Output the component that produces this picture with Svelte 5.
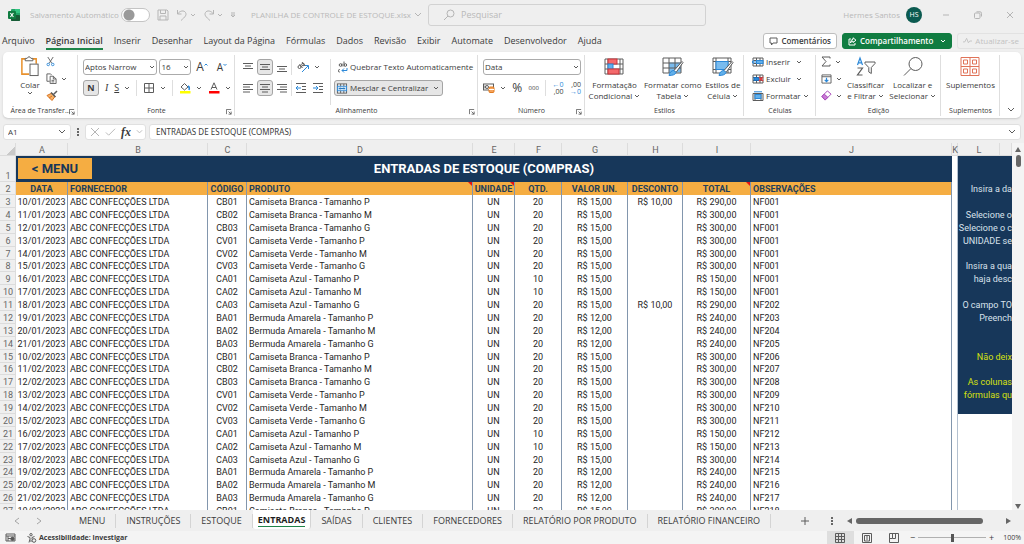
<script>
  const menuTabs = ['Arquivo', 'Página Inicial', 'Inserir', 'Desenhar', 'Layout da Página', 'Fórmulas', 'Dados', 'Revisão', 'Exibir', 'Automate', 'Desenvolvedor', 'Ajuda'];
  const sheets = ['MENU', 'INSTRUÇÕES', 'ESTOQUE', 'ENTRADAS', 'SAÍDAS', 'CLIENTES', 'FORNECEDORES', 'RELATÓRIO POR PRODUTO', 'RELATÓRIO FINANCEIRO'];
  const letters = ['A', 'B', 'C', 'D', 'E', 'F', 'G', 'H', 'I', 'J', 'K', 'L', ''];

  const headers = [
    { text: 'DATA' },
    { text: 'FORNECEDOR', left: true },
    { text: 'CÓDIGO' },
    { text: 'PRODUTO', left: true, note: true },
    { text: 'UNIDADE', note: true },
    { text: 'QTD.' },
    { text: 'VALOR UN.' },
    { text: 'DESCONTO' },
    { text: 'TOTAL', note: true },
    { text: 'OBSERVAÇÕES', left: true }
  ];

  // data, código, qtd, desconto, total, observação
  const entries = [
    ['10/01/2023', 'CB01', 20, 'R$ 10,00', '290,00', 'NF001'],
    ['11/01/2023', 'CB02', 20, '', '300,00', 'NF001'],
    ['12/01/2023', 'CB03', 20, '', '300,00', 'NF001'],
    ['13/01/2023', 'CV01', 20, '', '300,00', 'NF001'],
    ['14/01/2023', 'CV02', 20, '', '300,00', 'NF001'],
    ['15/01/2023', 'CV03', 20, '', '300,00', 'NF001'],
    ['16/01/2023', 'CA01', 10, '', '150,00', 'NF001'],
    ['17/01/2023', 'CA02', 10, '', '150,00', 'NF001'],
    ['18/01/2023', 'CA03', 20, 'R$ 10,00', '290,00', 'NF202'],
    ['19/01/2023', 'BA01', 20, '', '240,00', 'NF203'],
    ['20/01/2023', 'BA02', 20, '', '240,00', 'NF204'],
    ['21/01/2023', 'BA03', 20, '', '240,00', 'NF205'],
    ['10/02/2023', 'CB01', 20, '', '300,00', 'NF206'],
    ['11/02/2023', 'CB02', 20, '', '300,00', 'NF207'],
    ['12/02/2023', 'CB03', 20, '', '300,00', 'NF208'],
    ['13/02/2023', 'CV01', 20, '', '300,00', 'NF209'],
    ['14/02/2023', 'CV02', 20, '', '300,00', 'NF210'],
    ['15/02/2023', 'CV03', 20, '', '300,00', 'NF211'],
    ['16/02/2023', 'CA01', 10, '', '150,00', 'NF212'],
    ['17/02/2023', 'CA02', 10, '', '150,00', 'NF213'],
    ['18/02/2023', 'CA03', 20, '', '300,00', 'NF214'],
    ['19/02/2023', 'BA01', 20, '', '240,00', 'NF215'],
    ['20/02/2023', 'BA02', 20, '', '240,00', 'NF216'],
    ['21/02/2023', 'BA03', 20, '', '240,00', 'NF217'],
    ['10/03/2023', 'CB01', 20, '', '300,00', 'NF218']
  ];

  const products = { CB: 'Camiseta Branca', CV: 'Camiseta Verde', CA: 'Camiseta Azul', BA: 'Bermuda Amarela' };
  const sizes = { 1: 'P', 2: 'M', 3: 'G' };

  // help panel lines, by sheet row
  const help = {
    2: 'Insira a da',
    4: 'Selecione o',
    5: 'Selecione o c',
    6: 'UNIDADE se',
    8: 'Insira a qua',
    9: 'haja desc',
    11: 'O campo TO',
    12: 'Preench',
    15: 'Não deix',
    17: 'As colunas',
    18: 'fórmulas qu'
  };
  const helpEnd = 19;

  let activeMenu = $state('Página Inicial');
  let activeSheet = $state('ENTRADAS');
  let zoom = $state(50);

  function productName(code) {
    return `${products[code.slice(0, 2)]} - Tamanho ${sizes[code.slice(3)]}`;
  }
</script>

{#snippet chevron()}
  <svg class="chev" viewBox="0 0 6 6" width="6" height="6"><path d="M1 2l2 2 2-2" /></svg>
{/snippet}

{#snippet launcher()}
  <svg class="launcher" viewBox="0 0 7 7" width="6" height="6"><path d="M.5 6V.5H6M3 3l3 3M6 3v3H3" /></svg>
{/snippet}

{#snippet lines(widths, centered)}
  <svg class="ico" viewBox="0 0 12 12" width="12" height="12">
    {#each widths as w, i}
      <path d={`M${centered ? 6 - w / 2 : 1} ${2.5 + i * 2.5}h${w}`} />
    {/each}
  </svg>
{/snippet}

{#snippet helpCell(row)}
  {#if row <= helpEnd}
    <td class="help" class:warn={row >= 15} colspan="2">{help[row] ?? ''}</td>
  {:else}
    <td colspan="2"></td>
  {/if}
{/snippet}

<div class="excel">
  <header class="titlebar">
    <div class="quick">
      <svg class="logo" viewBox="0 0 12 12" width="12" height="12">
        <rect x="3" y="0" width="9" height="12" rx="1" fill="#21a366" />
        <rect x="7" y="0" width="5" height="4" fill="#33c481" />
        <rect x="3" y="6" width="9" height="6" rx="1" fill="#185c37" />
        <rect x="0" y="2" width="8" height="8" rx="1" fill="#107c41" />
        <path d="M2.4 4l3 4M5.4 4l-3 4" stroke="#fff" stroke-width="1.1" />
      </svg>
      <label class="autosave">
        Salvamento Automático
        <input type="checkbox" />
      </label>
      <button aria-label="Salvar">
        <svg viewBox="0 0 12 12" width="12" height="12"><path d="M1 1h9l1 1v9H1zM3.500 1v3.500h5V1M3 11V7h6v4" /></svg>
      </button>
      <button aria-label="Desfazer">
        <svg viewBox="0 0 12 12" width="12" height="12"><path d="M1.500 1v4h4M1.500 5C4 1.500 8 1 9.500 3.500S9 8 5 11.500" /></svg>{@render chevron()}
      </button>
      <button aria-label="Refazer">
        <svg viewBox="0 0 12 12" width="12" height="12"><path d="M10.500 1v4h-4M10.500 5C8 1.500 4 1 2.500 3.500S3 8 7 11.500" /></svg>{@render chevron()}
      </button>
      <button aria-label="Personalizar">
        <svg viewBox="0 0 6 8" width="6" height="8"><path d="M1 2h4M1 4l2 2 2-2z" /></svg>
      </button>
    </div>
    <button class="filename">PLANILHA DE CONTROLE DE ESTOQUE.xlsx
      <svg viewBox="0 0 8 6" width="8" height="6"><path d="M1 1l3 3 3-3" /></svg>
    </button>
    <label class="search">
      <svg viewBox="0 0 12 12" width="12" height="12"><circle cx="7.500" cy="4.500" r="3.500" /><path d="M5 7L1 11" /></svg>
      <input type="text" placeholder="Pesquisar" aria-label="Pesquisar" />
    </label>
    <div class="account">
      <span>Hermes Santos</span>
      <span class="avatar">HS</span>
      <button aria-label="Minimizar"><svg viewBox="0 0 8 8" width="8" height="8"><path d="M1 4h6" /></svg></button>
      <button aria-label="Restaurar"><svg viewBox="0 0 8 8" width="8" height="8"><rect x=".5" y="2" width="5.500" height="5.500" rx="1" /><path d="M2.500 .8H6q1.500 0 1.500 1.500V5.500" /></svg></button>
      <button aria-label="Fechar"><svg viewBox="0 0 8 8" width="8" height="8"><path d="M1 1l6 6M7 1L1 7" /></svg></button>
    </div>
  </header>

  <nav class="menu">
    {#each menuTabs as tab}
      <button class:active={tab === activeMenu} onclick={() => (activeMenu = tab)}>{tab}</button>
    {/each}
    <div class="actions">
      <button class="comments">
        <svg viewBox="0 0 9 9" width="9" height="9"><path d="M1 1h7v5H4L2.500 8V6H1z" /></svg>Comentários
      </button>
      <button class="share">
        <svg viewBox="0 0 9 9" width="9" height="9"><path d="M3 2H1v6h6V6M5 .8l3 2.400L5 5.500V4Q3 4 2.500 6 2.500 2.500 5 2.300z" /></svg>Compartilhamento
        {@render chevron()}
      </button>
      <button class="update">
        <svg viewBox="0 0 10 8" width="9" height="8"><path d="M0 5h2l2-4 2 5 1.500-2H10" /></svg>Atualizar-se
      </button>
    </div>
  </nav>

  <section class="ribbon">
    <div class="group">
      <div class="body clip">
        <button class="big">
          <svg viewBox="0 0 20 22" width="20" height="22">
            <path d="M5 3H1.500v16H9M13 3h3.500v5" stroke="#e8912d" stroke-width="1.600" />
            <path d="M5 5V2.500h2Q9 -1 11 2.500h2V5z" fill="#fff" />
            <rect x="10" y="8.500" width="8.500" height="12" fill="#fff" />
          </svg>
          Colar
          {@render chevron()}
        </button>
        <div class="stack">
          <button aria-label="Recortar"><svg viewBox="0 0 10 12" width="9" height="11"><path d="M2 1l4.500 7M8 1L3.500 8" /><circle cx="2.500" cy="9.300" r="1.400" stroke="#2b88d8" /><circle cx="7.500" cy="9.300" r="1.400" stroke="#2b88d8" /></svg></button>
          <button aria-label="Copiar"><svg viewBox="0 0 12 12" width="11" height="11"><path d="M4 9H1V1h4l1 1M4.500 3.500H8l3 3V11.500H4.500zM8 3.500v3h3M6 8h3M6 9.700h3" /></svg>{@render chevron()}</button>
          <button aria-label="Pincel"><svg viewBox="0 0 12 11" width="12" height="11"><path d="M1 5.500l5-2.500 3 3.500-3 4z" fill="#f5b26b" stroke="#d9721c" /><path d="M3 8l3-2" stroke="#d9721c" /><path d="M5 2.500l4.500 4.500M7.500 4.500L11 1" stroke-width="1.500" /></svg></button>
        </div>
      </div>
      <div class="caption">Área de Transfer...{@render launcher()}</div>
    </div>

    <div class="group">
      <div class="body rows">
        <div class="row">
          <span class="pick font"><select aria-label="Fonte"><option>Aptos Narrow</option></select>{@render chevron()}</span>
          <span class="pick size"><select aria-label="Tamanho"><option>16</option></select>{@render chevron()}</span>
          <button class="letter" aria-label="Aumentar fonte">A<svg viewBox="0 0 4 8" width="4" height="10"><path d="M.5 2.500L2 1l1.500 1.500" stroke="#2b88d8" /></svg></button>
          <button class="letter small" aria-label="Diminuir fonte">A<svg viewBox="0 0 4 8" width="4" height="10"><path d="M.5 1L2 2.500 3.500 1" stroke="#2b88d8" /></svg></button>
        </div>
        <div class="row spread">
          <button class="on sq"><b>N</b></button>
          <button><i>I</i></button>
          <button><u>S</u>{@render chevron()}</button>
          <span class="bar"></span>
          <button aria-label="Bordas"><svg class="ico" viewBox="0 0 12 12" width="12" height="12"><path d="M1.500 1.500h9v9h-9zM6 1.500v9M1.500 6h9" /></svg>{@render chevron()}</button>
          <span class="bar"></span>
          <button aria-label="Cor de preenchimento"><svg viewBox="0 0 12 12" width="12" height="12"><path d="M2 5l3.500-3.500L9 5 5.500 8z" /><path d="M9 4q2 1 1 4" stroke="#2b88d8" stroke-width="1.500" /><rect x="1" y="9" width="10.500" height="2.500" fill="#ff0" stroke="none" /></svg>{@render chevron()}</button>
          <button aria-label="Cor da fonte"><svg viewBox="0 0 12 12" width="12" height="12"><path d="M3 7.500L6 .8l3 6.700M4 5.500h4" /><rect x="1" y="9" width="10.500" height="2.500" fill="#f00" stroke="none" /></svg>{@render chevron()}</button>
        </div>
      </div>
      <div class="caption">Fonte{@render launcher()}</div>
    </div>

    <div class="group align">
      <div class="body rows">
        <div class="row">
          <button class="sq" aria-label="Topo">{@render lines([10, 6, 10], true)}</button>
          <button class="sq on" aria-label="Meio"><svg class="ico" viewBox="0 0 12 12" width="12" height="12"><path d="M1 3.500h10M3 6h6M1 8.500h10" /></svg></button>
          <button class="sq" aria-label="Base"><svg class="ico" viewBox="0 0 12 12" width="12" height="12"><path d="M1 5.500h10M3 8h6M1 10.500h10" /></svg></button>
          <span class="bar"></span>
          <button class="orient" aria-label="Orientação"><svg viewBox="0 0 12 12" width="12" height="12"><path d="M5 11l6-6M8 4.500h3.500V8" stroke="#2b88d8" /><circle cx="2.500" cy="6" r="1.500" /><path d="M2.500 3l3 4M5 1l3 4" /><circle cx="6" cy="3.500" r="1.300" /></svg>{@render chevron()}</button>
        </div>
        <div class="row">
          <button class="sq" aria-label="Esquerda">{@render lines([10, 7, 10, 7], false)}</button>
          <button class="sq on" aria-label="Centro">{@render lines([10, 6, 10, 6], true)}</button>
          <button class="sq" aria-label="Direita"><svg class="ico" viewBox="0 0 12 12" width="12" height="12"><path d="M1 2.500h10M4 5h7M1 7.500h10M4 10h7" /></svg></button>
          <span class="bar"></span>
          <button class="sq" aria-label="Diminuir recuo"><svg class="ico" viewBox="0 0 12 12" width="12" height="12"><path d="M1 1.500h10M7 4.500h4M7 7.500h4M1 10.500h10" /><path d="M6 6H1M3 4L1 6l2 2" stroke="#2b88d8" /></svg></button>
          <button class="sq" aria-label="Aumentar recuo"><svg class="ico" viewBox="0 0 12 12" width="12" height="12"><path d="M1 1.500h10M7 4.500h4M7 7.500h4M1 10.500h10" /><path d="M1 6h5M4 4l2 2-2 2" stroke="#2b88d8" /></svg></button>
        </div>
      </div>
      <div class="body rows wide">
        <button class="wrap">
          <svg viewBox="0 0 10 12" width="10" height="12"><circle cx="2.500" cy="4" r="1.300" /><path d="M4 2.500v3M6 .5v5M1.800 8.500q-1.500 0-1.500 1.300t1.500 1.300" /><circle cx="7.400" cy="4" r="1.300" /><path d="M9 7v2.500H4M6 7.500l-2 2 2 2" stroke="#2b88d8" /></svg>
          Quebrar Texto Automaticamente
        </button>
        <button class="on merge">
          <svg viewBox="0 0 12 12" width="12" height="11"><rect x="1" y="1" width="10" height="10" fill="#fff" /><rect x="1" y="3.500" width="10" height="5" fill="#cfe6f8" stroke="#2b88d8" /><path d="M4.500 1v2.500M8 1v2.500M4.500 8.500V11M8 8.500V11" /><path d="M3 6h6M4 5L3 6l1 1M8 5l1 1-1 1" stroke="#1b6fb8" /></svg>
          Mesclar e Centralizar
          {@render chevron()}
        </button>
      </div>
      <div class="caption">Alinhamento{@render launcher()}</div>
    </div>

    <div class="group">
      <div class="body rows">
        <div class="row"><span class="pick format"><select aria-label="Formato de número"><option>Data</option></select>{@render chevron()}</span></div>
        <div class="row spread">
          <button aria-label="Moeda"><svg viewBox="0 0 12 10" width="12" height="10"><rect x=".5" y="1" width="10" height="6" /><circle cx="4" cy="4" r="1.500" /><path d="M2 2.500v3" /><rect x="6" y="4" width="5" height="5.500" rx="1" fill="#f5a35c" stroke="#e07a1f" /><path d="M6 6.500h5" stroke="#fff" /></svg>{@render chevron()}</button>
          <button class="pct">%</button>
          <button class="zeros">000</button>
          <span class="bar"></span>
          <button class="dec" aria-label="Aumentar casas"><span>←0</span><span>,00</span></button>
          <button class="dec" aria-label="Diminuir casas"><span>,00</span><span>→0</span></button>
        </div>
      </div>
      <div class="caption">Número{@render launcher()}</div>
    </div>

    <div class="group">
      <div class="body bigs">
        <button class="big">
          <svg viewBox="0 0 20 18" width="20" height="18"><path d="M1 1.500h18v15H1zM1 6.500h18M1 11.500h18M4 1.500v15M16 1.500v15" /><rect x="4" y="1.500" width="9" height="5" fill="#f4696b" stroke="#c9353a" /><rect x="4" y="6.500" width="5" height="5" fill="#62b0ea" stroke="#2b88d8" /><rect x="4" y="11.500" width="11" height="5" fill="#f4696b" stroke="#c9353a" /></svg>
          <span>Formatação</span><span>Condicional {@render chevron()}</span>
        </button>
        <button class="big">
          <svg viewBox="0 0 22 20" width="22" height="20"><rect x="7" y="6" width="12" height="10" fill="#79bbee" stroke="none" /><path d="M1 1.500h18v15H1zM1 6.500h18M1 11.500h18M7 1.500v15M13 1.500v15" /><path d="M20 5l-8 9 2 2 7-10z" fill="#fff" /><path d="M12 14q-4 0-5 5 6 0 7-3z" fill="#62b0ea" stroke="#2b88d8" /></svg>
          <span>Formatar como</span><span>Tabela {@render chevron()}</span>
        </button>
        <button class="big">
          <svg viewBox="0 0 22 20" width="22" height="20"><path d="M1 1.500h18v15H1zM1 5h18M1 13h18M4 1.500v15M16 1.500v15" /><rect x="4" y="5" width="12" height="8" fill="#79bbee" stroke="#2b88d8" /><path d="M20 5l-8 9 2 2 7-10z" fill="#fff" /><path d="M12 14q-4 0-5 5 6 0 7-3z" fill="#62b0ea" stroke="#2b88d8" /></svg>
          <span>Estilos de</span><span>Célula {@render chevron()}</span>
        </button>
      </div>
      <div class="caption">Estilos</div>
    </div>

    <div class="group">
      <div class="body stack cells">
        <button><svg viewBox="0 0 12 10" width="12" height="10"><path d="M1 1h10v8H1zM1 3.500h10M1 6.500h10M4.500 1v8M8 1v8" /><rect x="4.500" y="3.500" width="6.500" height="3" fill="#62b0ea" stroke="#2b88d8" /><path d="M5 5H0M2 3L0 5l2 2" stroke="#2b88d8" /></svg><span>Inserir</span>{@render chevron()}</button>
        <button><svg viewBox="0 0 12 10" width="12" height="10"><path d="M1 1h10v8H1zM1 3.500h10M1 6.500h10M4.500 1v8M8 1v8" /><rect x="2" y="3.500" width="5" height="3" fill="#2b88d8" stroke="#1b6fb8" /><path d="M7 3l4 4M11 3L7 7" stroke="#e0393e" stroke-width="1.300" /></svg><span>Excluir</span>{@render chevron()}</button>
        <button><svg viewBox="0 0 12 10" width="12" height="10"><path d="M1 2.500h10v7H1zM3 2.500v7M9 2.500v7" /><rect x="3" y="3.500" width="6" height="4" fill="#62b0ea" stroke="#2b88d8" /><path d="M2 .8h8" stroke="#2b88d8" /></svg><span>Formatar</span>{@render chevron()}</button>
      </div>
      <div class="caption">Células</div>
    </div>

    <div class="group">
      <div class="body edit">
        <div class="stack">
          <button aria-label="AutoSoma"><svg viewBox="0 0 10 11" width="10" height="11"><path d="M9 2.500V1H1l4 4.500L1 10h8V8.500" /></svg>{@render chevron()}</button>
          <button aria-label="Preencher"><svg viewBox="0 0 12 11" width="11" height="10"><path d="M1 1h10v9H1zM1 3h10" /><path d="M6 4v4.500M4 6.500l2 2 2-2" stroke="#2b88d8" stroke-width="1.300" /></svg>{@render chevron()}</button>
          <button aria-label="Limpar"><svg viewBox="0 0 12 12" width="11" height="11"><path d="M1 7l6-6 4 3.500-6 6H4z" fill="#fff" stroke="#a33fb5" /><path d="M1 7l2.500-2.500 4 3.500L5 10.500H4z" fill="#c97ad6" stroke="#a33fb5" /></svg>{@render chevron()}</button>
        </div>
        <button class="big">
          <svg viewBox="0 0 20 20" width="20" height="20"><path d="M1.500 8.500L4 1.500l2.500 7M2.300 6.300h3.400" stroke="#2b88d8" stroke-width="1.200" /><path d="M1.500 11.500h5l-5 7h5" stroke-width="1.200" /><path d="M9 5.500h10v1.500l-3.700 4v6l-2.500-1.500v-4.500L9 7z" /></svg>
          <span>Classificar</span><span>e Filtrar {@render chevron()}</span>
        </button>
        <button class="big">
          <svg viewBox="0 0 20 20" width="20" height="20"><circle cx="12.500" cy="7.500" r="6.500" /><path d="M8 12l-7 7" /></svg>
          <span>Localizar e</span><span>Selecionar {@render chevron()}</span>
        </button>
      </div>
      <div class="caption">Edição</div>
    </div>

    <div class="group">
      <div class="body bigs">
        <button class="big">
          <svg class="addins" viewBox="0 0 20 20" width="20" height="20"><path d="M1 1h18v18H1zM10 1v18M1 10h18" /><path d="M3.500 3.500h4v4h-4zM12.500 3.500h4v4h-4zM3.500 12.500h4v4h-4zM12.500 12.500h4v4h-4z" /></svg>
          <span>Suplementos</span>
        </button>
      </div>
      <div class="caption">Suplementos</div>
    </div>

    <button class="collapse" aria-label="Recolher"><svg viewBox="0 0 8 6" width="8" height="6"><path d="M1 1l3 3 3-3" /></svg></button>
  </section>

  <div class="formula">
    <div class="namebox">
      <input type="text" value="A1" aria-label="Caixa de nome" />
      <svg viewBox="0 0 8 6" width="8" height="6"><path d="M1 1l3 3 3-3" /></svg>
    </div>
    <span class="dots"></span>
    <div class="fx">
      <svg viewBox="0 0 10 10" width="10" height="10"><path d="M1 1l8 8M9 1L1 9" stroke="#b5b5b5" /></svg>
      <svg viewBox="0 0 12 10" width="11" height="10"><path d="M1 5.500L4 8.500 11 1.500" stroke="#b5b5b5" /></svg>
      <i>fx</i>
      <svg viewBox="0 0 8 6" width="7" height="6"><path d="M1 1l3 3 3-3" stroke="#b5b5b5" /></svg>
    </div>
    <div class="content">
      <input type="text" value="ENTRADAS DE ESTOQUE (COMPRAS)" aria-label="Barra de fórmulas" />
      <svg viewBox="0 0 8 6" width="8" height="6"><path d="M1 1l3 3 3-3" /></svg>
    </div>
  </div>

  <main class="sheet">
    <div class="grid">
      <table>
        <colgroup>
          <col class="w-num" /><col class="w-a" /><col class="w-b" /><col class="w-c" /><col class="w-d" /><col class="w-e" />
          <col class="w-f" /><col class="w-g" /><col class="w-h" /><col class="w-i" /><col /><col class="w-k" /><col class="w-l" /><col class="w-m" />
        </colgroup>
        <thead>
          <tr>
            <th class="corner"></th>
            {#each letters as letter}
              <th>{letter}</th>
            {/each}
          </tr>
        </thead>
        <tbody>
          <tr class="title">
            <th>1</th>
            <td class="banner" colspan="10">
              <a href="#menu">&lt; MENU</a>
              ENTRADAS DE ESTOQUE (COMPRAS)
            </td>
            <td class="gap"></td>
            {@render helpCell(1)}
          </tr>
          <tr class="heads">
            <th>2</th>
            {#each headers as head}
              <td class:left={head.left} class:note={head.note}>{head.text}</td>
            {/each}
            <td class="gap"></td>
            {@render helpCell(2)}
          </tr>
          {#each entries as [date, code, qty, discount, total, obs], i}
            <tr class="entry">
              <th>{i + 3}</th>
              <td>{date}</td>
              <td class="left">ABC CONFECÇÕES LTDA</td>
              <td>{code}</td>
              <td class="left">{productName(code)}</td>
              <td>UN</td>
              <td>{qty}</td>
              <td>{code[0] === 'C' ? 'R$ 15,00' : 'R$ 12,00'}</td>
              <td>{discount}</td>
              <td>R$ {total}</td>
              <td class="left">{obs}</td>
              <td class="gap"></td>
              {@render helpCell(i + 3)}
            </tr>
          {/each}
        </tbody>
      </table>
    </div>
    <div class="vscroll">
      <svg viewBox="0 0 6 6" width="6" height="6"><path d="M0 5h6L3 0z" /></svg>
      <span class="thumb"></span>
      <svg viewBox="0 0 6 6" width="6" height="6"><path d="M0 1h6L3 6z" /></svg>
    </div>
  </main>

  <div class="sheets">
    <div class="arrows">
      <svg viewBox="0 0 6 8" width="6" height="8"><path d="M5 1L1 4l4 3" /></svg>
      <svg viewBox="0 0 6 8" width="6" height="8"><path d="M1 1l4 3-4 3" /></svg>
    </div>
    {#each sheets as sheet}
      <button class="tab" class:active={sheet === activeSheet} onclick={() => (activeSheet = sheet)}><span>{sheet}</span></button>
    {/each}
    <button class="add" aria-label="Nova planilha"><svg viewBox="0 0 8 8" width="8" height="8"><path d="M4 0v8M0 4h8" /></svg></button>
    <span class="dots"></span>
    <div class="hscroll">
      <svg viewBox="0 0 6 6" width="6" height="6"><path d="M5 0v6L0 3z" /></svg>
      <span class="thumb"></span>
      <svg viewBox="0 0 6 6" width="6" height="6"><path d="M1 0v6l5-3z" /></svg>
    </div>
  </div>

  <footer class="status">
    <svg viewBox="0 0 11 9" width="11" height="9"><path d="M1 1h9v7H1zM1 3h9M3 3v5M3 5.500h3" /><circle cx="7.500" cy="5.800" r="1.700" fill="#555" /></svg>
    <button class="access"><svg viewBox="0 0 10 10" width="10" height="10"><circle cx="4" cy="1.700" r="1.200" /><path d="M.5 3.500l2.500 1V6L2 9.500M7.500 3.500L5 4.500V6M4 6.500V9" /><circle cx="7" cy="7.500" r="1.800" /></svg>Acessibilidade: investigar</button>
    <div class="views">
      <button class="current" aria-label="Normal"><svg viewBox="0 0 10 10" width="10" height="10"><path d="M.5 .5h9v9h-9zM.5 3.500h9M.5 6.500h9M3.500 .5v9M6.500 .5v9" /></svg></button>
      <button aria-label="Layout da página"><svg viewBox="0 0 10 10" width="10" height="10"><path d="M.5 .5h9v9h-9zM2.500 2.500h5v5.500h-5zM4 4h2M4 6h2" /></svg></button>
      <button aria-label="Quebra de página"><svg viewBox="0 0 10 10" width="10" height="10"><path d="M.5 .5h9v9h-9zM3.500 .5v5h3v-5M.5 5.500h3" /></svg></button>
    </div>
    <label class="zoom">
      <span>−</span>
      <input type="range" min="0" max="100" bind:value={zoom} aria-label="Zoom" />
      <span>+</span>
    </label>
    <span class="percent">100%</span>
  </footer>
</div>

<style>
  :global(body) {
    background: #efefef;
  }

  .excel {
    display: flex;
    flex-direction: column;
    height: 100vh;
    overflow: hidden;
    background: #efefef;
    color: #3b3b3b;
    font: 8px/10px "Open Sans", "Noto Sans", sans-serif;
  }

  button,
  input,
  select {
    margin: 0;
    padding: 0;
    border: 0;
    background: none;
    color: inherit;
    font: inherit;
  }

  button {
    display: flex;
    align-items: center;
    justify-content: center;
    white-space: nowrap;
  }

  svg {
    flex: none;
    fill: none;
    stroke: #5c5c5c;
    stroke-width: 1;
  }

  .chev {
    display: inline-block;
  }

  /* title bar */
  .titlebar {
    position: relative;
    display: flex;
    align-items: center;
    height: 30px;
    flex: none;
    color: #b9b9b9;
  }

  .titlebar svg {
    stroke: #b5b5b5;
  }

  .titlebar .logo {
    stroke: none;
  }

  .quick {
    display: flex;
    align-items: center;
    gap: 7px;
    width: 251px;
    padding-left: 8px;
    box-sizing: border-box;
    white-space: nowrap;
  }

  .quick button {
    gap: 2px;
  }

  .autosave {
    display: flex;
    align-items: center;
    gap: 2px;
    margin-left: 3px;
  }

  .autosave input {
    appearance: none;
    width: 29px;
    height: 14px;
    border: 1px solid #c4c4c4;
    border-radius: 7px;
    background: radial-gradient(circle at 7px 6px, #9a9a9a 5px, #fff 6px);
  }

  .filename {
    gap: 3px;
    width: 177px;
    justify-content: flex-start;
  }

  .search {
    display: flex;
    align-items: center;
    gap: 6px;
    flex: 0 1 278px;
    height: 22px;
    box-sizing: border-box;
    padding: 0 14px;
    border: 1px solid #d2d2d2;
    border-radius: 3px;
  }

  .search input {
    flex: 1;
    min-width: 0;
    outline: 0;
    font-size: 9px;
  }

  .search input::placeholder {
    color: #b9b9b9;
  }

  .account {
    display: flex;
    align-items: center;
    margin-left: auto;
    padding-right: 10px;
    gap: 24px;
  }

  .avatar {
    width: 16px;
    height: 16px;
    margin: 0 -4px 0 -18px;
    border-radius: 50%;
    background: #0b5a50;
    color: #fff;
    font-size: 7px;
    line-height: 16px;
    text-align: center;
  }

  /* menu tabs */
  .menu {
    display: flex;
    align-items: flex-start;
    gap: 11px;
    height: 22px;
    flex: none;
    padding-left: 2px;
    font-size: 9px;
  }

  .menu > button {
    height: 20px;
    padding-top: 3px;
    box-sizing: border-box;
    border-bottom: 2px solid transparent;
  }

  .menu > button.active {
    border-color: #1e8449;
    font-weight: 600;
  }

  .actions {
    display: flex;
    gap: 5px;
    margin-left: auto;
    padding-top: 3px;
    font-size: 8px;
  }

  .actions button {
    gap: 3px;
    height: 16px;
    padding: 0 5px;
    box-sizing: border-box;
    border: 1px solid #bdbdbd;
    border-radius: 3px;
    background: #fff;
    font-weight: 600;
  }

  .actions .share {
    border-color: #107c41;
    background: #107c41;
    color: #fff;
  }

  .share svg {
    stroke: #fff;
  }

  .share .chev {
    margin-left: 4px;
  }

  .actions .update {
    border-color: #e2e2e2;
    border-right: 0;
    border-radius: 3px 0 0 3px;
    background: none;
    color: #c2c2c2;
    font-weight: 400;
  }

  .update svg {
    stroke: #c2c2c2;
  }

  /* ribbon */
  .ribbon {
    display: grid;
    grid-template-columns: 75fr 157fr 243fr 107fr 159fr 72fr 125fr 59fr 21fr;
    flex: none;
    height: 66px;
    margin: 0 3px;
    border-radius: 5px;
    background: #fff;
    box-shadow: 0 1px 2px #c9c9c9;
  }

  .group {
    position: relative;
    display: grid;
    grid-template-rows: 1fr 14px;
    min-width: 0;
    padding-top: 2px;
  }

  .group::after {
    content: '';
    position: absolute;
    top: 3px;
    right: 0;
    bottom: 3px;
    width: 1px;
    background: #dedede;
  }

  .caption {
    position: relative;
    grid-column: 1 / -1;
    font-size: 7px;
    line-height: 11px;
    text-align: center;
    white-space: nowrap;
  }

  .launcher {
    position: absolute;
    right: 3px;
    bottom: 4px;
  }

  .body {
    display: flex;
    min-width: 0;
  }

  .rows {
    flex-direction: column;
    gap: 5px;
    padding: 5px 4px 0 5px;
  }

  .row {
    display: flex;
    align-items: center;
    gap: 2px;
    height: 16px;
  }

  .row.spread {
    justify-content: space-between;
  }

  .row button {
    gap: 5px;
  }

  .bar {
    width: 1px;
    height: 16px;
    background: #dedede;
  }

  .on {
    border: 1px solid #a5a5a5;
    border-radius: 3px;
    background: #e6e6e6;
  }

  .sq {
    width: 16px;
    height: 16px;
    box-sizing: border-box;
  }

  .row b,
  .row i,
  .row u {
    font-size: 9px;
  }

  .row i {
    font-family: "Liberation Serif", serif;
    font-size: 10px;
  }

  .clip {
    justify-content: center;
    gap: 6px;
    padding-left: 6px;
  }

  .stack {
    display: flex;
    flex-direction: column;
    gap: 6px;
    padding-top: 2px;
  }

  .stack button {
    justify-content: flex-start;
    gap: 4px;
    height: 11px;
  }

  .big {
    flex-direction: column;
    justify-content: flex-start;
    height: 51px;
    padding-top: 2px;
    line-height: 11px;
  }

  .big > svg:first-child {
    height: 21px;
    margin-bottom: 2px;
  }

  .pick {
    position: relative;
    display: flex;
    height: 16px;
  }

  .pick select {
    appearance: none;
    width: 100%;
    padding-left: 1px;
    border: 1px solid #ababab;
    border-radius: 3px;
    background: #fff;
  }

  .pick .chev {
    position: absolute;
    top: 5px;
    right: 2px;
  }

  .pick.font {
    flex: 78 1 0;
  }

  .pick.size {
    flex: 33 1 0;
  }

  .pick.format {
    flex: 1;
  }

  .row .letter {
    gap: 0;
    width: 18px;
    font-size: 12px;
  }

  .row .letter.small {
    font-size: 10px;
  }

  .group.align {
    grid-template-columns: 95fr 148fr;
  }

  .align .row {
    gap: 1px;
  }

  .orient {
    margin-left: 4px;
  }

  .wide {
    align-items: flex-start;
    border-left: 1px solid #dedede;
    margin-top: 5px;
    padding: 0 0 0 3px;
  }

  .wide button {
    height: 16px;
    gap: 2px;
    padding: 0 4px;
  }

  .wide .merge {
    box-sizing: border-box;
    padding: 0 3px 0 1px;
  }

  .merge .chev {
    margin-left: 3px;
  }

  .row .pct {
    font-size: 12px;
  }

  .row .zeros {
    font-size: 6px;
  }

  .row .dec {
    flex-direction: column;
    align-items: flex-end;
    gap: 0;
    font-size: 7px;
    line-height: 7px;
  }

  .dec span:first-child {
    color: #2b88d8;
  }

  .dec + .dec span:first-child {
    color: inherit;
  }

  .dec + .dec span:last-child {
    color: #2b88d8;
  }

  .bigs {
    justify-content: space-evenly;
  }

  .cells {
    padding-left: 8px;
  }

  .cells button {
    gap: 2px;
  }

  .cells span {
    min-width: 28px;
    text-align: left;
  }

  .edit {
    justify-content: space-evenly;
  }

  .addins {
    stroke: #e07358;
  }

  .collapse {
    align-self: end;
    padding-bottom: 6px;
  }

  /* formula bar */
  .formula {
    display: flex;
    align-items: center;
    flex: none;
    height: 17px;
    margin: 5px 3px 3px;
    font-size: 9px;
  }

  .formula > div {
    display: flex;
    align-items: center;
    height: 16px;
    box-sizing: border-box;
    padding: 0 4px;
    border: 1px solid #e0e0e0;
    border-radius: 3px;
    background: #fff;
  }

  .formula input {
    flex: 1;
    min-width: 0;
    font-size: 8px;
  }

  .namebox {
    width: 68px;
  }

  .dots {
    width: 2px;
    height: 8px;
    margin: 0 6px;
    background: repeating-linear-gradient(#666 0 2px, transparent 2px 3px);
  }

  .formula .fx {
    gap: 5px;
    padding: 0 2px 0 4px;
  }

  .fx i {
    font: italic bold 12px/14px "Liberation Serif", serif;
  }

  .formula .content {
    flex: 1;
    margin-left: 3px;
    padding-left: 6px;
  }

  .content input {
    font-family: "Noto Sans", "Open Sans", sans-serif;
  }

  /* sheet */
  .sheet {
    display: flex;
    flex: 1;
    min-height: 0;
  }

  .grid {
    flex: 1;
    min-width: 0;
    overflow: hidden;
    background: #fff;
  }

  table {
    width: 100%;
    table-layout: fixed;
    border-collapse: separate;
    border-spacing: 0;
    color: #262626;
    font: 9px/12px Roboto, "Liberation Sans", sans-serif;
  }

  .w-num { width: 16px; }
  .w-a { width: 52px; }
  .w-b { width: 140px; }
  .w-c { width: 39px; }
  .w-d { width: 226px; }
  .w-e { width: 42px; }
  .w-f { width: 47px; }
  .w-g { width: 66px; }
  .w-h { width: 55px; }
  .w-i { width: 68px; }
  .w-k { width: 6px; }
  .w-l { width: 42px; }
  .w-m { width: 12px; }

  th {
    padding: 0;
    background: #efefef;
    color: #666;
    font-weight: 400;
    box-shadow: inset -1px -1px #dcdcdc;
  }

  thead th {
    height: 13px;
  }

  .corner {
    background: linear-gradient(135deg, #efefef 65%, #c9c9c9 65%);
  }

  td {
    padding: 0;
    overflow: hidden;
    text-align: center;
    white-space: nowrap;
  }

  tbody tr {
    height: 13px;
  }

  /* the 12.9px row pitch lands on a 12px row now and then */
  .entry:nth-child(8n) {
    height: 12px;
    line-height: 11px;
  }

  .entry td:nth-child(-n + 11),
  .heads td:nth-child(-n + 11) {
    border-right: 1px solid #8296ad;
  }

  .left {
    padding-left: 2px;
    text-align: left;
  }

  .title {
    height: 26px;
  }

  .title th {
    vertical-align: bottom;
  }

  .banner {
    position: relative;
    background: #17375a;
    color: #fff;
    font-size: 13px;
    font-weight: 700;
  }

  .banner a {
    position: absolute;
    top: 2px;
    left: 2px;
    width: 74px;
    height: 21px;
    background: #f5ad42;
    color: #17375a;
    line-height: 21px;
    text-decoration: none;
  }

  .heads td:nth-child(-n + 11) {
    position: relative;
    background: #f5ad42;
    color: #24405a;
    font-weight: 700;
  }

  .note::after {
    content: '';
    position: absolute;
    top: 0;
    right: 0;
    border: 2px solid;
    border-color: #e81111 #e81111 transparent transparent;
  }

  .gap {
    border-right: 1px solid #b4c1d0;
  }

  tr .help {
    background: #17375a;
    color: #d9e2ec;
    text-align: right;
  }

  tr .help.warn {
    color: #d6e00f;
  }

  .vscroll {
    display: flex;
    flex-direction: column;
    align-items: center;
    width: 12px;
    padding: 4px 0 1px;
    box-sizing: border-box;
    background: #f4f4f4;
  }

  .vscroll svg,
  .hscroll svg {
    fill: #666;
    stroke: none;
  }

  .vscroll .thumb {
    width: 5px;
    height: 12px;
    margin: 2px 0 auto;
    border-radius: 3px;
    background: #666;
  }

  /* sheet tabs */
  .sheets {
    display: flex;
    align-items: center;
    flex: none;
    height: 21px;
    font-size: 9px;
  }

  .arrows {
    display: flex;
    gap: 16px;
    width: 69px;
    padding-left: 14px;
    box-sizing: border-box;
  }

  .arrows svg {
    stroke: #a5a5a5;
  }

  .tab {
    height: 14px;
    padding: 0 10px;
    border-right: 1px solid #d4d4d4;
  }

  .tab.active {
    align-self: flex-start;
    height: 19px;
    padding: 0 5px;
    border-radius: 0 0 3px 3px;
    background: #fff;
    color: #1e1e1e;
    font-weight: 700;
  }

  .tab.active span {
    border-bottom: 1px solid #1e8449;
    line-height: 13px;
  }

  .add {
    margin-left: 30px;
  }

  .sheets .dots {
    margin: 0 14px 0 auto;
  }

  .hscroll {
    display: flex;
    align-items: center;
    width: 164px;
    margin-right: 13px;
  }

  .hscroll .thumb {
    width: 127px;
    height: 6px;
    margin: 0 auto 0 3px;
    border-radius: 3px;
    background: #666;
  }

  /* status bar */
  .status {
    display: flex;
    align-items: center;
    flex: none;
    height: 13px;
    padding: 0 3px 0 5px;
    background: #f4f4f4;
    font-size: 7px;
  }

  .access {
    gap: 2px;
    margin-left: 11px;
    font-weight: 700;
  }

  .views {
    display: flex;
    margin-left: auto;
  }

  .views button {
    width: 27px;
    height: 13px;
  }

  .views .current {
    background: #dedede;
  }

  .zoom {
    display: flex;
    align-items: center;
    gap: 3px;
    margin-left: 2px;
    font-size: 9px;
  }

  .zoom input {
    appearance: none;
    width: 68px;
    height: 9px;
    background: linear-gradient(#b0b0b0, #b0b0b0) center / 100% 1px no-repeat;
  }

  .zoom input::-webkit-slider-thumb {
    appearance: none;
    width: 3px;
    height: 8px;
    background: #555;
  }

  .percent {
    margin-left: 9px;
  }
</style>
